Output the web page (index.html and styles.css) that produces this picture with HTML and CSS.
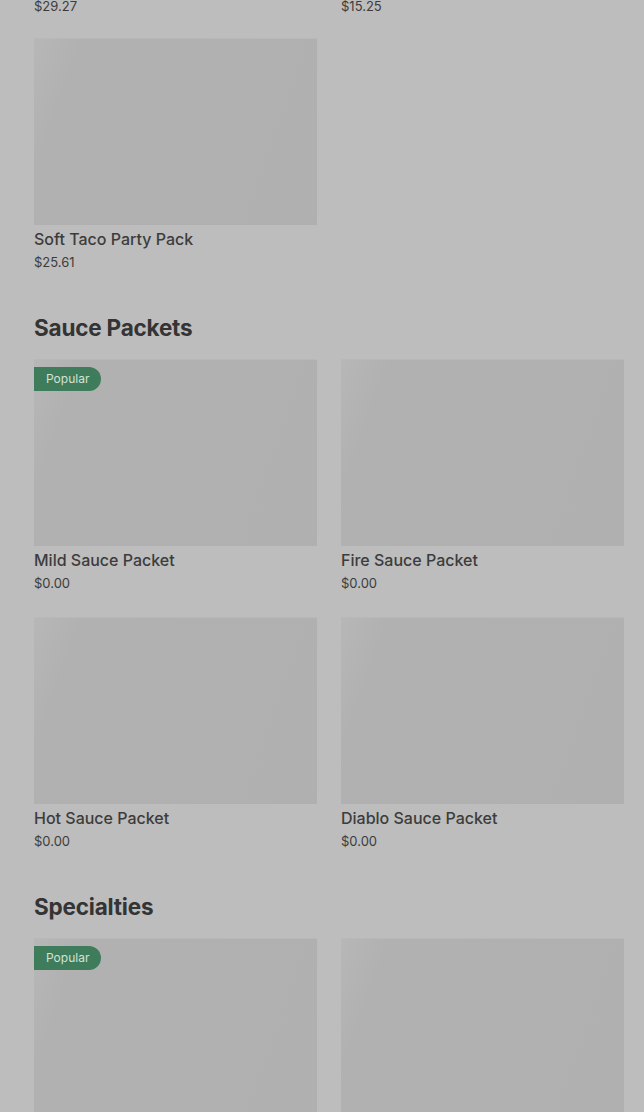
FILE: index.html
```html
<!DOCTYPE html>
<html>

<head>
    <title>Menu</title>
    <link rel="stylesheet" href="styles.css">
</head>

<body>
    <div class="menu">
        <div class="grid grid-top">
            <div class="item">
                <div class="item-image"></div>
                <div class="item-name">Crunchy Taco Party Pack</div>
                <div class="item-price">$29.27</div>
            </div>
            <div class="item">
                <div class="item-image"></div>
                <div class="item-name">Taco Supreme Party Pack</div>
                <div class="item-price">$15.25</div>
            </div>
            <div class="item">
                <div class="item-image"></div>
                <div class="item-name">Soft Taco Party Pack</div>
                <div class="item-price">$25.61</div>
            </div>
        </div>

        <section class="section">
            <h2 class="section-title">Sauce Packets</h2>
            <div class="grid">
                <div class="item">
                    <div class="item-image">
                        <span class="badge">Popular</span>
                    </div>
                    <div class="item-name">Mild Sauce Packet</div>
                    <div class="item-price">$0.00</div>
                </div>
                <div class="item">
                    <div class="item-image"></div>
                    <div class="item-name">Fire Sauce Packet</div>
                    <div class="item-price">$0.00</div>
                </div>
                <div class="item">
                    <div class="item-image"></div>
                    <div class="item-name">Hot Sauce Packet</div>
                    <div class="item-price">$0.00</div>
                </div>
                <div class="item">
                    <div class="item-image"></div>
                    <div class="item-name">Diablo Sauce Packet</div>
                    <div class="item-price">$0.00</div>
                </div>
            </div>
        </section>

        <section class="section">
            <h2 class="section-title">Specialties</h2>
            <div class="grid">
                <div class="item">
                    <div class="item-image">
                        <span class="badge">Popular</span>
                    </div>
                </div>
                <div class="item">
                    <div class="item-image"></div>
                </div>
            </div>
        </section>
    </div>
</body>

</html>
```

FILE: styles.css
```css
html,
body {
    margin: 0;
    background-color: #bdbdbd;
    font-family: Inter, "Noto Sans", sans-serif;
    color: #3a3a3a;
    overflow: hidden;
}

.menu {
    padding: 0 20px 0 34px;
    margin-top: -218px;
}

.grid {
    display: grid;
    grid-template-columns: 1fr 1fr;
    column-gap: 24px;
    row-gap: 25px;
}

.grid-top {
    row-gap: 23px;
}

.item-image {
    position: relative;
    height: 187px;
    background: linear-gradient(110deg, #b7b7b7 0%, #b1b1b1 14%, #b0b0b0 100%);
    box-shadow: inset 0 1px 0 #b8b8b8;
}

.item-name {
    margin-top: 4px;
    font-size: 16px;
    font-weight: 500;
    line-height: 20px;
    color: #3c3c3c;
}

.item-price {
    margin-top: 4px;
    font-size: 13px;
    line-height: 18px;
    color: #3c3c3c;
}

.section {
    margin-top: 43px;
}

.section-title {
    margin: 0 0 17px;
    font-size: 22.5px;
    font-weight: 700;
    line-height: 28px;
    letter-spacing: -0.2px;
    color: #343434;
}

.badge {
    position: absolute;
    top: 8px;
    left: 0;
    height: 24px;
    padding: 0 12px;
    line-height: 24px;
    font-size: 12px;
    color: #d2e3d8;
    background-color: #3e7c5b;
    border-radius: 0 12px 12px 0;
}
```
